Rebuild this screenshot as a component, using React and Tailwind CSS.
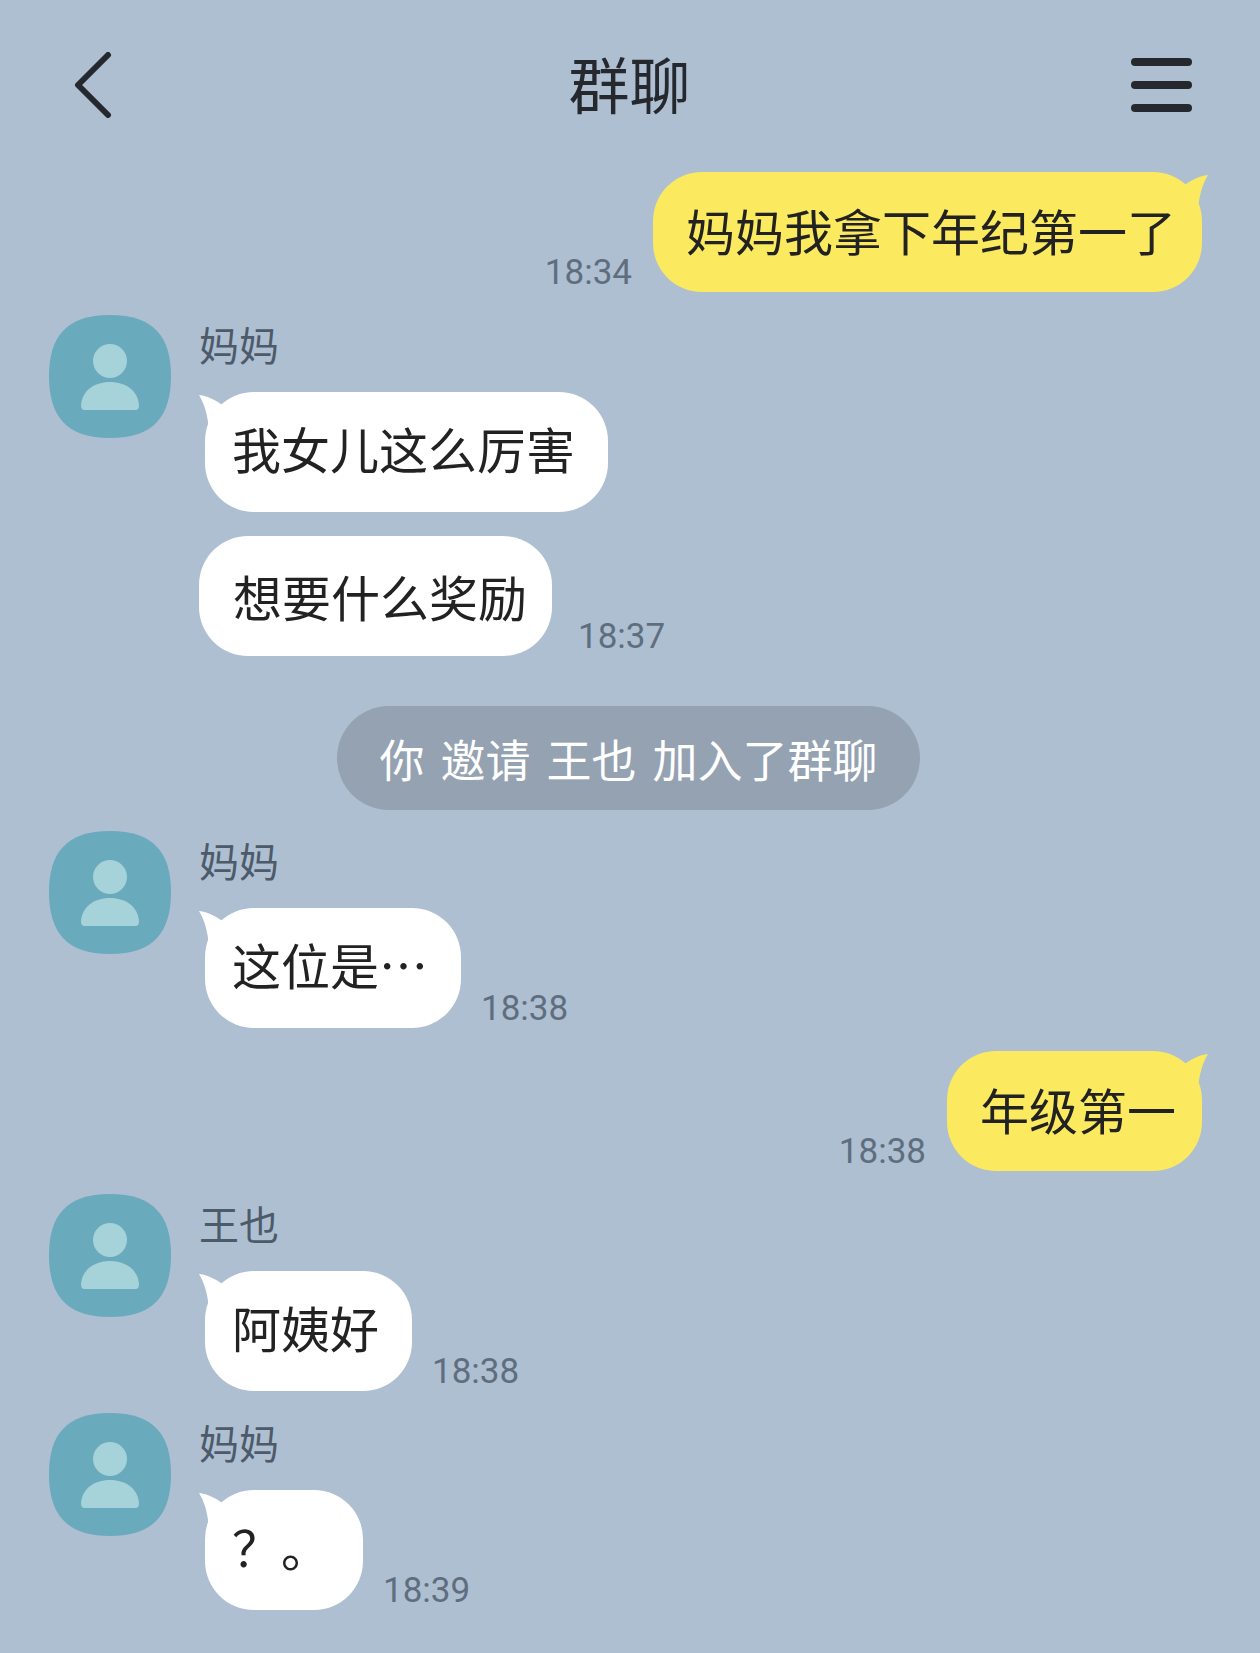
const cjk = "font-['Noto_Sans_CJK_SC','Noto_Sans',sans-serif]";

function Avatar() {
  return (
    <svg viewBox="0 0 122 123" className="w-[122px] h-[123px] shrink-0" aria-hidden>
      <path d="M61 0C105 0 122 22 122 61C122 101 105 123 61 123C17 123 0 101 0 61C0 22 17 0 61 0Z" fill="#6aaabd" />
      <circle cx="61" cy="46" r="17" fill="#a6d2d9" />
      <path d="M36 95C33 95 32 93 32 90C33 76 45 67 61 67C77 67 89 76 90 90C90 93 89 95 86 95Z" fill="#a6d2d9" />
    </svg>
  );
}

function Tail({ right }) {
  return (
    <svg
      viewBox="0 0 34 40"
      className={right ? "absolute top-[3px] right-[-6px] w-[34px] h-[40px] -scale-x-100" : "absolute top-[3px] left-[-6px] w-[34px] h-[40px]"}
      aria-hidden
    >
      <path d="M0 0C9 1 16 5 22 9L34 20L10 36C9 20 5 8 0 0Z" fill={right ? "#fbe95f" : "#ffffff"} />
    </svg>
  );
}

function Time({ children }) {
  return <span className="font-['Roboto',sans-serif] text-[35px] leading-none text-[#5f6e7e] mb-[2px]">{children}</span>;
}

function Bubble({ children, tail = true, yellow = false, className = "" }) {
  return (
    <div className={`relative h-[120px] flex items-center rounded-[49px] text-[49px] leading-none text-[#222222] whitespace-nowrap ${yellow ? "bg-[#fbe95f] pl-[33px] pr-[26px] pb-[5px]" : "bg-white"} ${className}`}>
      {tail && <Tail right={yellow} />}
      <span className="relative">{children}</span>
    </div>
  );
}

function LeftGroup({ name, text, time, className = "" }) {
  return (
    <div className={`flex gap-[28px] ${className}`}>
      <Avatar />
      <div className="flex flex-col">
        <div className="h-[77px] pt-[5px] text-[40px] leading-[48px] text-[#4d5a69]">{name}</div>
        <div className="flex items-end gap-[20px] ml-[6px]">
          <Bubble className="pl-[27px] pr-[33px] pb-[10px]">{text}</Bubble>
          {time && <Time>{time}</Time>}
        </div>
      </div>
    </div>
  );
}

function RightMessage({ text, time, className = "" }) {
  return (
    <div className={`flex justify-end items-end gap-[21px] ${className}`}>
      <Time>{time}</Time>
      <Bubble yellow>{text}</Bubble>
    </div>
  );
}

export default function App() {
  return (
    <div className={`${cjk} w-[1260px] h-[1653px] bg-[#aebfd2] overflow-hidden`}>
      <header className="flex items-center justify-between h-[172px] pb-[2px] pl-[73px] pr-[68px]">
        <div className="flex-1">
          <svg width="40" height="66" viewBox="0 0 40 66" fill="none" aria-hidden>
            <path d="M35 3L5 33L35 63" stroke="#25292e" strokeWidth="6" strokeLinecap="round" strokeLinejoin="round" />
          </svg>
        </div>
        <h1 className="text-[61px] leading-none font-normal text-[#25292e] pb-[6px] pr-[6px]">群聊</h1>
        <div className="flex-1 flex justify-end">
          <svg width="61" height="54" viewBox="0 0 61 54" aria-hidden>
            <rect x="0" y="0" width="61" height="8" rx="4" fill="#25292e" />
            <rect x="0" y="23" width="61" height="8" rx="4" fill="#25292e" />
            <rect x="0" y="46" width="61" height="8" rx="4" fill="#25292e" />
          </svg>
        </div>
      </header>

      <main className="flex flex-col pl-[49px] pr-[58px]">
        <RightMessage text="妈妈我拿下年纪第一了" time="18:34" />

        <LeftGroup name="妈妈" text="我女儿这么厉害" className="mt-[23px]" />
        <div className="flex items-end gap-[26px] ml-[150px] mt-[24px]">
          <Bubble tail={false} className="pl-[34px] pr-[25px] pb-[2px]">想要什么奖励</Bubble>
          <Time>18:37</Time>
        </div>

        <div className="self-center mt-[50px] ml-[6px] h-[104px] w-[583px] flex items-center justify-center rounded-full bg-[#94a2b1] text-[45px] leading-none text-white whitespace-pre [word-spacing:6px]">
          你 邀请 王也 加入了群聊
        </div>

        <LeftGroup name="妈妈" text="这位是…" time="18:38" className="mt-[21px]" />
        <RightMessage text="年级第一" time="18:38" className="mt-[23px]" />
        <LeftGroup name="王也" text="阿姨好" time="18:38" className="mt-[23px]" />
        <LeftGroup name="妈妈" text="？。" time="18:39" className="mt-[22px]" />
      </main>
    </div>
  );
}
